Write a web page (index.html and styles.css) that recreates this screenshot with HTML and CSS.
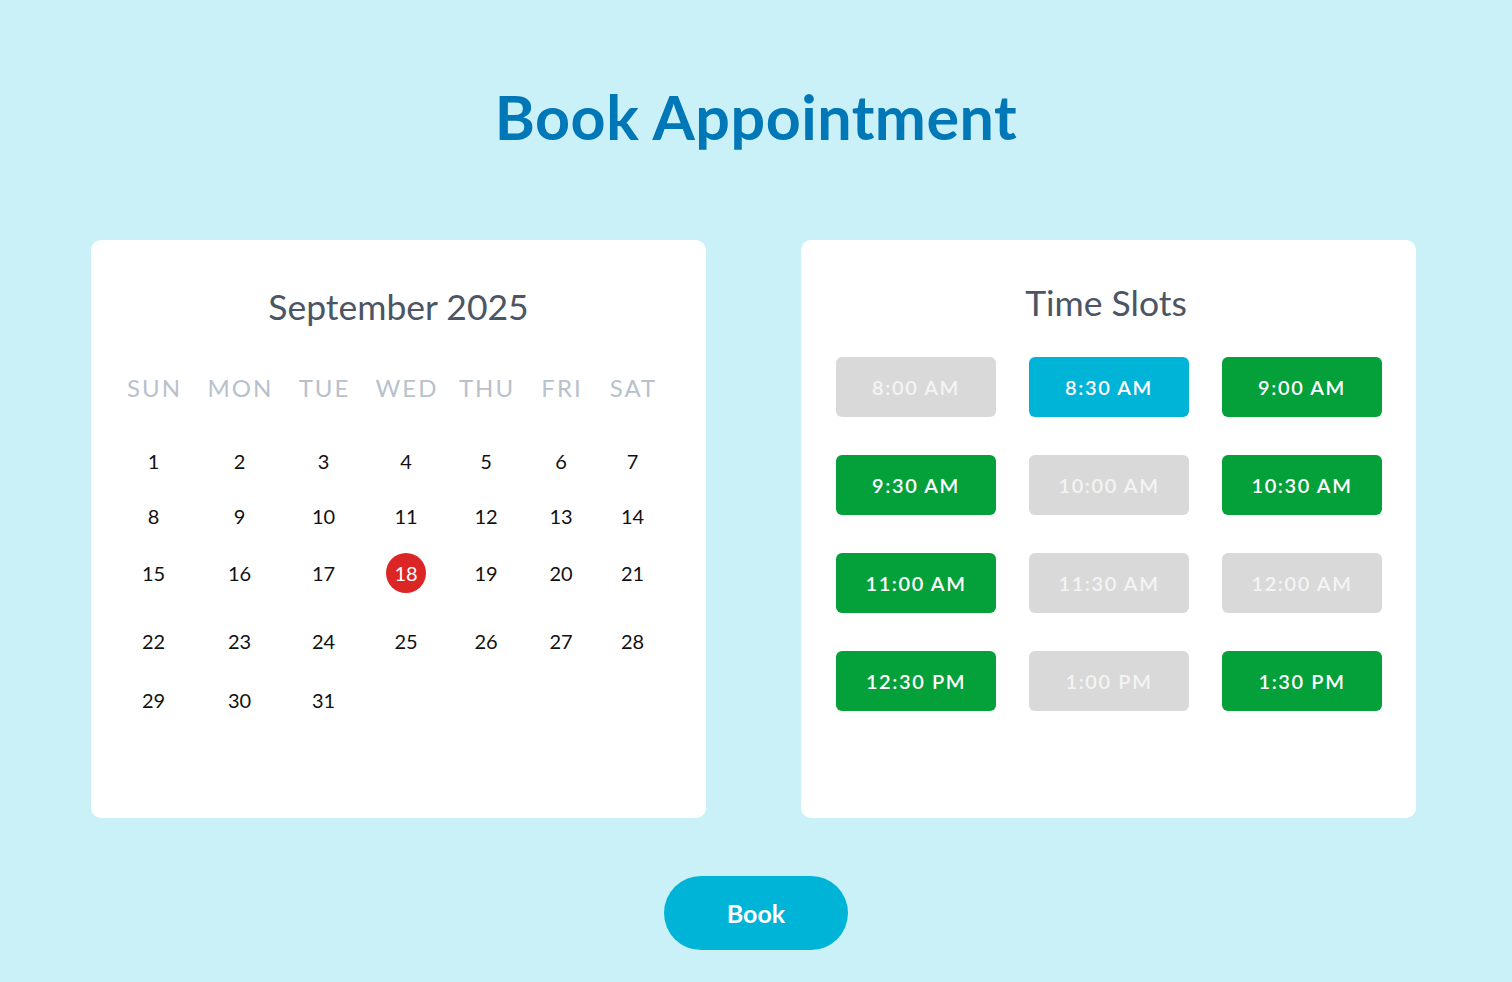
FILE: index.html
```html
<!DOCTYPE html>
<html lang="en">
<head>
<meta charset="utf-8">
<title>Book Appointment</title>
<link rel="stylesheet" href="styles.css">
</head>
<body>
<main class="page">
  <h1 class="title">Book Appointment</h1>
  <section class="cards">
    <div class="card calendar">
      <h2 class="card-title month">September 2025</h2>
      <div class="cal-grid">
        <span class="wd">SUN</span><span class="wd">MON</span><span class="wd">TUE</span><span class="wd">WED</span><span class="wd">THU</span><span class="wd">FRI</span><span class="wd">SAT</span>
        <span class="day">1</span><span class="day">2</span><span class="day">3</span><span class="day">4</span><span class="day">5</span><span class="day">6</span><span class="day">7</span>
        <span class="day">8</span><span class="day">9</span><span class="day">10</span><span class="day">11</span><span class="day">12</span><span class="day">13</span><span class="day">14</span>
        <span class="day">15</span><span class="day">16</span><span class="day">17</span><span class="day selected">18</span><span class="day">19</span><span class="day">20</span><span class="day">21</span>
        <span class="day">22</span><span class="day">23</span><span class="day">24</span><span class="day">25</span><span class="day">26</span><span class="day">27</span><span class="day">28</span>
        <span class="day">29</span><span class="day">30</span><span class="day">31</span>
      </div>
    </div>
    <div class="card slots-card">
      <h2 class="card-title">Time Slots</h2>
      <div class="slots">
        <button class="slot off">8:00 AM</button>
        <button class="slot picked">8:30 AM</button>
        <button class="slot free">9:00 AM</button>
        <button class="slot free">9:30 AM</button>
        <button class="slot off">10:00 AM</button>
        <button class="slot free">10:30 AM</button>
        <button class="slot free">11:00 AM</button>
        <button class="slot off">11:30 AM</button>
        <button class="slot off">12:00 AM</button>
        <button class="slot free">12:30 PM</button>
        <button class="slot off">1:00 PM</button>
        <button class="slot free">1:30 PM</button>
      </div>
    </div>
  </section>
  <div class="actions">
    <button class="book">Book</button>
  </div>
</main>
</body>
</html>
```

FILE: styles.css
```css
* { box-sizing: border-box; }

html, body {
  margin: 0;
  padding: 0;
}

body {
  background: #caf0f8;
  font-family: "Lato", "Open Sans", sans-serif;
  min-height: 982px;
}

.page {
  display: flex;
  flex-direction: column;
  align-items: center;
  padding-top: 81px;
}

.title {
  margin: 0;
  font-size: 61px;
  line-height: 72px;
  font-weight: 700;
  color: #0077b6;
  letter-spacing: 0.5px;
}

.cards {
  display: flex;
  gap: 95px;
  margin-top: 87px;
  padding-right: 5px;
}

.card {
  width: 615px;
  height: 578px;
  background: #ffffff;
  border-radius: 10px;
  padding-top: 42px;
}

.card-title {
  margin: 0;
  text-align: center;
  font-size: 35.5px;
  line-height: 41px;
  font-weight: 400;
  color: #4b5563;
}

.month {
  margin-top: 4px;
}

.cal-grid {
  display: grid;
  margin-top: 46px;
  margin-left: 19px;
  grid-template-columns: 87px 85px 83px 82px 78px 72px 71px;
  grid-template-rows: 60px 56px 54px 60px 76px 42px;
  justify-items: center;
  align-items: center;
}

.wd {
  align-self: start;
  font-size: 24px;
  line-height: 30px;
  letter-spacing: 2px;
  padding-left: 2px;
  color: #b8c1cc;
}

.day {
  font-size: 20px;
  line-height: 24px;
  color: #111111;
}

.day.selected {
  width: 40px;
  height: 40px;
  border-radius: 50%;
  background: #dc2626;
  color: #ffffff;
  display: flex;
  align-items: center;
  justify-content: center;
}

.slots-card .card-title {
  margin-top: 0;
  padding-right: 5px;
}

.slots {
  display: grid;
  grid-template-columns: repeat(3, 160px);
  grid-auto-rows: 60px;
  column-gap: 33px;
  row-gap: 38px;
  margin-top: 34px;
  padding-left: 35px;
}

.slot {
  border: none;
  border-radius: 6px;
  font-family: inherit;
  font-size: 20px;
  font-weight: 600;
  letter-spacing: 1.6px;
  color: #ffffff;
  padding: 0;
}

.slot.off {
  background: #d9d9d9;
  color: #f4f4f4;
}

.slot.picked {
  background: #00b4d8;
}

.slot.free {
  background: #04a03a;
}

.actions {
  margin-top: 58px;
  display: flex;
  justify-content: center;
}

.book {
  width: 184px;
  height: 74px;
  border: none;
  border-radius: 37px;
  background: #00b4d8;
  color: #ffffff;
  font-family: inherit;
  font-size: 25px;
  font-weight: 700;
}
```
